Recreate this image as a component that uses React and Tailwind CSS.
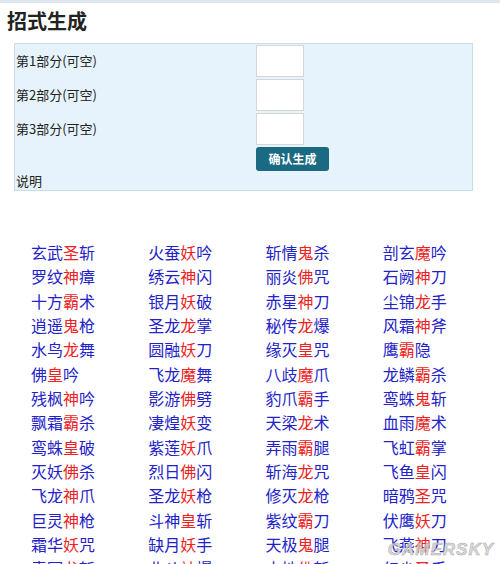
import React from 'react';

const FONT = { fontFamily: '"Noto Sans CJK SC", "Noto Sans", sans-serif' };

// [前缀, 红字, 后缀]
const COLUMNS = [
  [
    ['玄武', '圣', '斩'], ['罗纹', '神', '瘴'], ['十方', '霸', '术'], ['逍遥', '鬼', '枪'],
    ['水鸟', '龙', '舞'], ['佛', '皇', '吟'], ['残枫', '神', '吟'], ['飘霜', '霸', '杀'],
    ['鸾蛛', '皇', '破'], ['灭妖', '佛', '杀'], ['飞龙', '神', '爪'], ['巨灵', '神', '枪'],
    ['霜华', '妖', '咒'], ['青冥', '龙', '斩'],
  ],
  [
    ['火蚕', '妖', '吟'], ['绣云', '神', '闪'], ['银月', '妖', '破'], ['圣龙', '龙', '掌'],
    ['圆融', '妖', '刀'], ['飞龙', '魔', '舞'], ['影游', '佛', '劈'], ['凄煌', '妖', '变'],
    ['紫莲', '妖', '爪'], ['烈日', '佛', '闪'], ['圣龙', '妖', '枪'], ['斗神', '皇', '斩'],
    ['缺月', '妖', '手'], ['北斗', '神', '爆'],
  ],
  [
    ['斩情', '鬼', '杀'], ['丽炎', '佛', '咒'], ['赤星', '神', '刀'], ['秘传', '龙', '爆'],
    ['缘灭', '皇', '咒'], ['八歧', '魔', '爪'], ['豹爪', '霸', '手'], ['天梁', '龙', '术'],
    ['弄雨', '霸', '腿'], ['斩海', '龙', '咒'], ['修灭', '龙', '枪'], ['紫纹', '霸', '刀'],
    ['天极', '鬼', '腿'], ['大地', '佛', '斩'],
  ],
  [
    ['剖玄', '魔', '吟'], ['石阙', '神', '刀'], ['尘锦', '龙', '手'], ['风霜', '神', '斧'],
    ['鹰', '霸', '隐'], ['龙鳞', '霸', '杀'], ['鸾蛛', '鬼', '斩'], ['血雨', '魔', '术'],
    ['飞虹', '霸', '掌'], ['飞鱼', '皇', '闪'], ['暗鸦', '圣', '咒'], ['伏鹰', '妖', '刀'],
    ['飞燕', '神', '刀'], ['幻尘', '圣', '手'],
  ],
];

const FIELDS = ['第1部分(可空)', '第2部分(可空)', '第3部分(可空)'];

const Name = ({ parts }) => (
  <div className="h-[24.33px] leading-[24.33px] text-[16px] whitespace-nowrap text-[#2222c8]">
    {parts[0]}
    <span className="text-[#ee2222]">{parts[1]}</span>
    {parts[2]}
  </div>
);

export default function App() {
  return (
    <div className="relative w-[500px] h-[564px] overflow-hidden bg-white border-t-[3px] border-[#dfe7ee]" style={FONT}>
      {/* 标题 */}
      <h1 className="pl-[7px] pt-[4px] h-[40px] text-[20px] leading-[28px] font-bold text-[#222]">招式生成</h1>

      {/* 表单 */}
      <div className="ml-[14px] w-[459px] h-[148px] bg-[#e6f3fc] border border-[#c9dce8] p-[1px] text-[13px] text-[#222]">
        <div className="grid grid-cols-[240px_1fr] gap-y-[2px]">
          {FIELDS.map((label) => (
            <React.Fragment key={label}>
              <div className="flex items-center h-[32px]">{label}</div>
              <div>
                <input className="block w-[48px] h-[32px] bg-white border border-[#d6d6d6] outline-none" />
              </div>
            </React.Fragment>
          ))}
          <div />
          <div>
            <button className="w-[73px] h-[24px] rounded-[3px] bg-[#1a6a83] text-white text-[12px] font-bold">
              确认生成
            </button>
          </div>
        </div>
        <div className="h-[18px] leading-[18px] mt-[1px]">说明</div>
      </div>

      {/* 名单 */}
      <div className="flex pl-[31px] mt-[49px]">
        {COLUMNS.map((col, i) => (
          <div key={i} className="w-[118.5px]">
            {col.map((parts, j) => (
              <Name key={j} parts={parts} />
            ))}
          </div>
        ))}
      </div>

      {/* 水印 */}
      <div
        className="absolute right-[6px] bottom-[2px] text-[17px] font-bold italic tracking-[1px] text-[#d0d0d0]/80"
        style={{ fontFamily: '"Liberation Sans", Arial, sans-serif', WebkitTextStroke: '0.5px #aaa' }}
      >
        GAMERSKY
      </div>
    </div>
  );
}
